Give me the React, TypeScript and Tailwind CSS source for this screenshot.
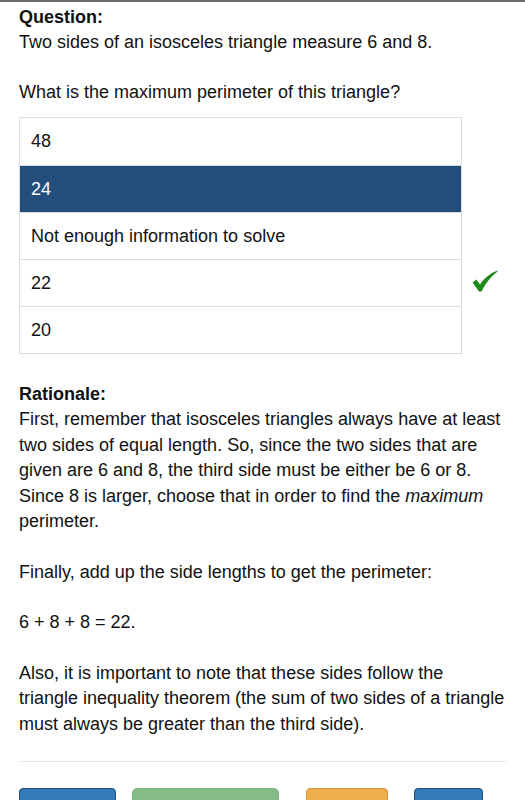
const options = ["48", "24", "Not enough information to solve", "22", "20"];
const selected = 1;
const correct = 3;

function Check() {
  return (
    <svg width="26" height="22" viewBox="0 0 26 22">
      <path
        d="M0.5 12.5 L4.5 9.5 L8 14.5 C12 8.5 17.5 3.5 25.5 0.5 L25.5 1.5 C19 6.5 13.5 13 9.5 21.5 L7 21.5 Z"
        fill="#1c8a1c"
      />
    </svg>
  );
}

export default function App() {
  return (
    <div
      className="w-[525px] h-[800px] overflow-hidden bg-white border-t-2 border-[#6b6b6b] text-[18px] text-[#111]"
      style={{ fontFamily: '"Liberation Sans", Arial, sans-serif' }}
    >
      <div className="px-[19px] pt-[3px]">
        <div className="font-bold leading-[25px]">Question:</div>
        <p className="leading-[25px]">Two sides of an isosceles triangle measure 6 and 8.</p>
        <p className="leading-[25px] mt-[25px]">What is the maximum perimeter of this triangle?</p>

        <div className="mt-[12px] flex items-start">
          <div className="w-[443px] shrink-0 border border-[#dcdcdc]">
            {options.map((o, i) => (
              <div
                key={o}
                className={
                  "h-[47px] flex items-center px-[11px] " +
                  (i > 0 ? "border-t border-[#dcdcdc] " : "") +
                  (i === selected ? "bg-[#234e7b] text-white" : "bg-white")
                }
              >
                {o}
              </div>
            ))}
          </div>
          <div className="flex flex-col pt-px">
            {options.map((o, i) => (
              <div key={o} className="h-[47px] w-[46px] flex items-center justify-center pb-[4px]">
                {i === correct && <Check />}
              </div>
            ))}
          </div>
        </div>

        <div className="mt-[28px] font-bold leading-[25px]">Rationale:</div>
        <div className="leading-[25.5px]">
          <p>
            First, remember that isosceles triangles always have at least
            <br />
            two sides of equal length. So, since the two sides that are
            <br />
            given are 6 and 8, the third side must be either be 6 or 8.
            <br />
            Since 8 is larger, choose that in order to find the <em>maximum</em>
            <br />
            perimeter.
          </p>
          <p className="mt-[25px]">Finally, add up the side lengths to get the perimeter:</p>
          <p className="mt-[25px]">6 + 8 + 8 = 22.</p>
          <p className="mt-[25px]">
            Also, it is important to note that these sides follow the
            <br />
            triangle inequality theorem (the sum of two sides of a triangle
            <br />
            must always be greater than the third side).
          </p>
        </div>

        <div className="mt-[24px] border-t border-[#e8e8e8] w-[488px]" />

        <div className="mt-[26px] flex">
          <div className="w-[97px] h-[34px] shrink-0 rounded-[4px] bg-[#337ab7] border border-[#1f4e7a]" />
          <div className="ml-[16px] w-[147px] h-[34px] shrink-0 rounded-[5px] bg-[#85bc85] border border-[#7fb47f]" />
          <div className="ml-[27px] w-[82px] h-[34px] shrink-0 rounded-[4px] bg-[#f0ad4e] border border-[#d9953a]" />
          <div className="ml-[26px] w-[69px] h-[34px] shrink-0 rounded-[4px] bg-[#337ab7] border border-[#1f4e7a]" />
        </div>
      </div>
    </div>
  );
}
